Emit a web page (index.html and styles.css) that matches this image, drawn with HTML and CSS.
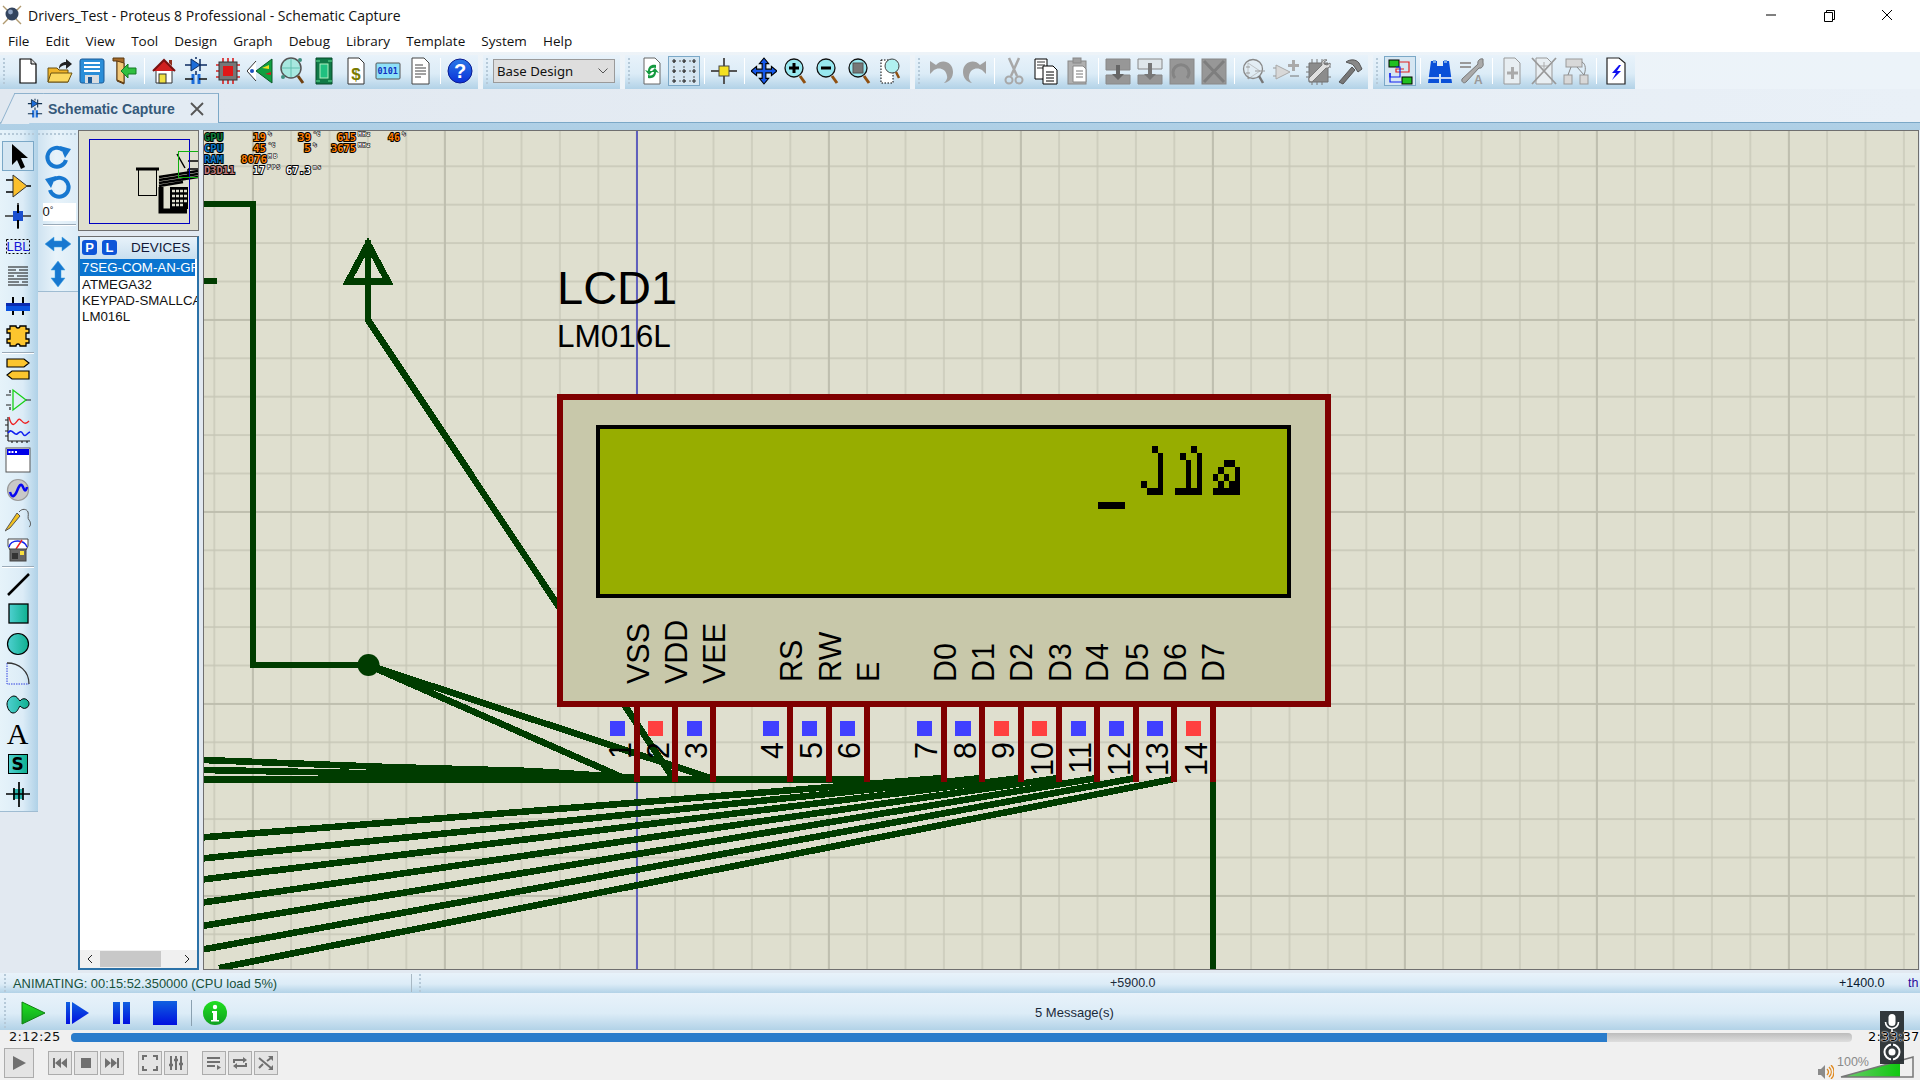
FILE: index.html
```html
<!DOCTYPE html>
<html lang="en">
<head>
<meta charset="utf-8">
<title>Drivers_Test - Proteus 8 Professional - Schematic Capture</title>
<link rel="stylesheet" href="styles.css">
</head>
<body>
<svg class="defs" width="0" height="0"><defs>
<linearGradient id="teal" x1="0" x2="1" y1="0" y2="0"><stop offset="0" stop-color="#4fd0d0"/><stop offset="1" stop-color="#0fb090"/></linearGradient>
<linearGradient id="blueb" x1="0" x2="0" y1="0" y2="1"><stop offset="0" stop-color="#2a7ae8"/><stop offset="1" stop-color="#0a30d8"/></linearGradient>
<linearGradient id="playb" x1="0" x2="0" y1="0" y2="1"><stop offset="0" stop-color="#1060e0"/><stop offset="1" stop-color="#0010e0"/></linearGradient>
<linearGradient id="playg" x1="0" x2="0" y1="0" y2="1"><stop offset="0" stop-color="#20e020"/><stop offset="1" stop-color="#10a020"/></linearGradient>
<linearGradient id="vol" x1="0" x2="1" y1="0" y2="0"><stop offset="0" stop-color="#70cc70"/><stop offset="1" stop-color="#10c810"/></linearGradient>
</defs></svg>
<div class="app">
  <header class="title">
    <svg class="appicon" viewBox="0 0 20 20"><path d="M1 1l18 18M19 1L1 19" stroke="#b09a70" stroke-width="1.4"/><circle cx="10" cy="9" r="6.5" fill="#33445f"/><circle cx="8.5" cy="7" r="2.4" fill="#8fa4c4"/></svg>
    <span class="title-text">Drivers_Test - Proteus 8 Professional - Schematic Capture</span>
    <div class="winbtns">
      <svg class="win" viewBox="0 0 46 20"><path d="M18 10h10" stroke="#000"/></svg>
      <svg class="win" viewBox="0 0 46 20"><path d="M18.500 7.500h8v9h-8zM20.500 7.500v-2h8v9h-2" fill="none" stroke="#000"/></svg>
      <svg class="win" viewBox="0 0 46 20"><path d="M18 5l10 10M28 5L18 15" stroke="#000"/></svg>
    </div>
  </header>
  <nav class="menu">
    <span>File</span><span>Edit</span><span>View</span><span>Tool</span><span>Design</span><span>Graph</span><span>Debug</span><span>Library</span><span>Template</span><span>System</span><span>Help</span>
  </nav>
  <div class="toolrow">
    <div class="tb tb1">
      <i class="grip"></i>
      <b class="btn"><svg viewBox="0 0 26 28"><path d="M5 2h11l5 5v19H5z" fill="#fff" stroke="#000" stroke-width="1.200"/><path d="M16 2v5h5" fill="#ddd" stroke="#000"/></svg></b>
      <b class="btn"><svg viewBox="0 0 26 28"><path d="M1 11h9l2 2h9v12H1z" fill="#f0b428" stroke="#6a5010"/><path d="M1 25l3-9h21l-4 9z" fill="#fbd860" stroke="#6a5010"/><path d="M12 12c0-5 3-7 7-7V2l6 5-6 5V8c-3 0-5 1-7 4z" fill="#222"/></svg></b>
      <b class="btn"><svg viewBox="0 0 26 28"><rect x="1" y="2" width="24" height="24" rx="2" fill="#2a8ed8" stroke="#1a5a98"/><path d="M5 5h16v2H5zM5 9h16v2H5zM5 13h16v2H5z" fill="#fff"/><rect x="6" y="18" width="14" height="8" fill="#d8dce0"/><rect x="9" y="20" width="4" height="6" fill="#1a5a98"/></svg></b>
      <b class="btn"><svg viewBox="0 0 26 28"><path d="M2 1h11v26l-7-3V4H2z" fill="#a56a28" stroke="#5a3810"/><path d="M6 4l7 2v20l-7-3z" fill="#f2c878" stroke="#5a3810"/><path d="M25 11h-8V7l-7 7 7 7v-4h8z" fill="#30c040" stroke="#157a25"/></svg></b>
      <i class="sep"></i>
      <b class="btn"><svg viewBox="0 0 26 28"><path d="M5 13h16v13H5z" fill="#fff" stroke="#333"/><path d="M2 14L13 3l11 11" fill="#d02020" stroke="#7a1010" stroke-width="2"/><path d="M18 3h3v6l-3-3z" fill="#903020"/><rect x="8" y="17" width="7" height="9" fill="#f0e040" stroke="#333"/></svg></b>
      <b class="btn"><svg viewBox="0 0 26 28"><path d="M8 2v12l9-6z" fill="#1c6cd8" stroke="#0a2a60"/><path d="M17 2v12M13 0v2M2 8h6M17 8h7M13 14v4" stroke="#0a2a60" stroke-width="1.500"/><path d="M10 17v10M16 17v10" stroke="#1c6cd8" stroke-width="3"/><path d="M2 22h8M16 22h8" stroke="#111" stroke-width="1.500"/></svg></b>
      <b class="btn"><svg viewBox="0 0 26 28"><path d="M8 1v26M13 1v26M18 1v26M1 8h24M1 14h24M1 20h24" stroke="#d82020" stroke-width="1.600"/><rect x="4" y="5" width="18" height="18" fill="#777" stroke="#333"/><rect x="8" y="9" width="10" height="10" fill="#e01818"/></svg></b>
      <b class="btn"><svg viewBox="0 0 26 28"><path d="M9 4L0 14l9 10" fill="#fff" stroke="#333"/><circle cx="5" cy="14" r="2" fill="#1c50c0"/><path d="M25 2L9 14l16 12z" fill="#10a040" stroke="#0a5a28"/><path d="M15 11l7-3v4z" fill="#f0e020"/><path d="M18 17l6-2v3z" fill="#d02020"/></svg></b>
      <b class="btn"><svg viewBox="0 0 26 28"><circle cx="12" cy="11" r="10" fill="#a8e8e0" stroke="#555" stroke-width="1.500"/><path d="M12 2v18M3 11h18" stroke="#60c0b0"/><path d="M19 19l5 7" stroke="#704010" stroke-width="3"/><circle cx="21" cy="3" r="2" fill="#409080"/><circle cx="4" cy="20" r="2" fill="#409080"/></svg></b>
      <b class="btn"><svg viewBox="0 0 26 28"><path d="M5 1h16v26H5z" fill="#107a48" stroke="#064a28"/><rect x="9" y="7" width="8" height="14" fill="#20c080" stroke="#b0f0c0"/><path d="M5 4h4M17 4h4M5 24h4M17 24h4" stroke="#60e090"/></svg></b>
      <b class="btn"><svg viewBox="0 0 26 28"><path d="M5 1h11l5 5v21H5z" fill="#fff" stroke="#333"/><text x="13" y="23" class="dollar">$</text></svg></b>
      <b class="btn"><svg viewBox="0 0 26 28"><rect x="1" y="6" width="24" height="16" rx="1" fill="#8ee0f8" stroke="#555"/><text x="2.500" y="17" class="binary">0101</text></svg></b>
      <b class="btn"><svg viewBox="0 0 26 28"><path d="M5 1h12l5 5v21H5z" fill="#fff" stroke="#444"/><path d="M8 8h8M8 11h11M8 14h11M8 17h11M8 20h6" stroke="#444" stroke-width="1.200"/></svg></b>
      <i class="sep"></i>
      <b class="btn"><svg viewBox="0 0 26 28"><circle cx="13" cy="14" r="12" fill="url(#blueb)" stroke="#0a1a90"/><text x="13" y="21" class="q">?</text></svg></b>
    </div>
    <div class="tb tb2">
      <i class="grip"></i>
      <div class="combo"><span>Base Design</span><svg viewBox="0 0 12 8"><path d="M1.500 1.500l4.500 4.500 4.500-4.500" fill="none" stroke="#555"/></svg></div>
    </div>
    <div class="tb tb3">
      <i class="grip"></i>
      <b class="btn"><svg viewBox="0 0 26 28"><path d="M5 1h11l5 5v21H5z" fill="#fff" stroke="#666"/><path d="M17 8c-5-1-8 2-8 6l-3-1 4 5 4-4-3 0c0-3 3-4 6-3z" fill="#169a40"/><path d="M9 21c5 1 8-2 8-6l3 1-4-5-4 4 3 0c0 3-3 4-6 3z" fill="#169a40"/></svg></b>
      <b class="btn on"><svg viewBox="0 0 26 28" class="gridicon"><path d="M3 4h20M3 14h20M3 24h20M3 4v20M13 4v20M23 4v20" stroke="#555" stroke-dasharray="2 3"/><path d="M1 4h4M3 2v4M11 4h4M13 2v4M21 4h4M23 2v4M1 14h4M3 12v4M11 14h4M13 12v4M21 14h4M23 12v4M1 24h4M3 22v4M11 24h4M13 22v4M21 24h4M23 22v4" stroke="#333" stroke-width="1.200"/></svg></b>
      <i class="sep"></i>
      <b class="btn"><svg viewBox="0 0 26 28"><path d="M13 1v26M0 14h26" stroke="#555" stroke-width="2"/><rect x="8" y="9" width="10" height="10" fill="#f4e020" stroke="#444"/></svg></b>
      <i class="sep"></i>
      <b class="btn"><svg viewBox="0 0 28 30"><path d="M14 1l5 6h-3v6h6v-3l6 5-6 5v-3h-6v6h3l-5 6-5-6h3v-6H6v3l-6-5 6-5v3h6V7H9z" fill="#1658e8" stroke="#000" stroke-width="1.200"/></svg></b>
      <b class="btn"><svg viewBox="0 0 26 28"><circle cx="11" cy="11" r="9" fill="#98e8f0" stroke="#111" stroke-width="1.300"/><path d="M11 6v10M6 11h10" stroke="#000" stroke-width="3"/><path d="M17 19l5 7" stroke="#905010" stroke-width="3"/></svg></b>
      <b class="btn"><svg viewBox="0 0 26 28"><circle cx="11" cy="11" r="9" fill="#98e8f0" stroke="#111" stroke-width="1.300"/><path d="M6 11h10" stroke="#000" stroke-width="3"/><path d="M17 19l5 7" stroke="#905010" stroke-width="3"/></svg></b>
      <b class="btn"><svg viewBox="0 0 26 28"><circle cx="11" cy="11" r="9" fill="#98e8f0" stroke="#111" stroke-width="1.300"/><rect x="6" y="6" width="10" height="10" fill="#777" stroke="#555"/><path d="M17 19l5 7" stroke="#905010" stroke-width="3"/></svg></b>
      <b class="btn"><svg viewBox="0 0 26 28"><rect x="2" y="3" width="12" height="23" fill="#fff" stroke="#000" stroke-dasharray="1.500 1.500"/><circle cx="13" cy="9" r="7" fill="#b0f0f0" stroke="#444"/><path d="M17 15l3 6" stroke="#905010" stroke-width="2.500"/></svg></b>
    </div>
    <div class="tb tb4">
      <i class="grip"></i>
      <b class="btn"><svg viewBox="0 0 26 28"><path d="M1 4v13l4-4c4-3 12-2 13 6 1 3-2 6-3 7 6-1 9-6 9-11C24 5 13 1 7 8L1 4z" fill="#a0a0a0"/></svg></b>
      <b class="btn"><svg viewBox="0 0 26 28"><path d="M25 4v13l-4-4c-4-3-12-2-13 6-1 3 2 6 3 7-6-1-9-6-9-11C2 5 13 1 19 8l6-4z" fill="#a0a0a0"/></svg></b>
      <i class="sep"></i>
      <b class="btn"><svg viewBox="0 0 26 28"><path d="M8 1l8 18M18 1l-8 18" stroke="#a8a8a8" stroke-width="2.500"/><circle cx="8" cy="23" r="3.500" fill="none" stroke="#a8a8a8" stroke-width="2"/><circle cx="18" cy="23" r="3.500" fill="none" stroke="#a8a8a8" stroke-width="2"/></svg></b>
      <b class="btn"><svg viewBox="0 0 26 28"><path d="M2 2h12v20H2z" fill="#fff" stroke="#000"/><path d="M4 5h8M4 8h8M4 11h8" stroke="#333"/><path d="M10 9h10l4 4v14H10z" fill="#fff" stroke="#000"/><path d="M13 15h8M13 18h8M13 21h8M13 24h8" stroke="#000" stroke-width="1.200"/></svg></b>
      <b class="btn"><svg viewBox="0 0 26 28"><rect x="3" y="4" width="18" height="23" fill="#b0b0b0" stroke="#888"/><rect x="8" y="1" width="8" height="5" fill="#a0a0a0" stroke="#888"/><path d="M8 9h10l3 3v13H8z" fill="#fff" stroke="#888"/><path d="M11 14h7M11 17h7M11 20h7" stroke="#777"/></svg></b>
      <i class="sep"></i>
      <b class="btn"><svg viewBox="0 0 26 28"><path d="M1 2h24v11H1zM1 18h24v9H1z" fill="#979797" stroke="#888"/><path d="M11 8h4v9h4l-6 6-6-6h4z" fill="#666"/></svg></b>
      <b class="btn"><svg viewBox="0 0 26 28"><path d="M1 2h24v10H1z" fill="#dfe6ea" stroke="#888"/><path d="M1 18h24v9H1z" fill="#979797" stroke="#888"/><path d="M11 6h4v11h4l-6 6-6-6h4z" fill="#777"/></svg></b>
      <b class="btn"><svg viewBox="0 0 26 28"><rect x="1" y="2" width="24" height="25" fill="#979797" stroke="#888"/><path d="M6 21a8 8 0 1 1 12 0" fill="none" stroke="#848484" stroke-width="3"/></svg></b>
      <b class="btn"><svg viewBox="0 0 26 28"><rect x="1" y="2" width="24" height="25" fill="#979797" stroke="#888"/><path d="M3 4l20 21M23 4L3 25" stroke="#7e7e7e" stroke-width="3"/></svg></b>
      <i class="sep"></i>
      <b class="btn"><svg viewBox="0 0 26 28"><path d="M7 6l12 8-12 8z" fill="none" stroke="#999"/><circle cx="12" cy="12" r="9.500" fill="#e4ecef" fill-opacity=".5" stroke="#888" stroke-width="1.300"/><path d="M5 10h4M5 16h4M14 14h10" stroke="#999"/><path d="M18 19l4 7" stroke="#777" stroke-width="2.500"/></svg></b>
      <b class="btn"><svg viewBox="0 0 26 28"><path d="M3 8l14 7-14 7z" fill="#d8d8d8" stroke="#aaa"/><path d="M0 11h3M0 19h3" stroke="#999"/><path d="M19 3h3v4h4v3h-4v4h-3v-4h-4V7h4z" fill="#aaa"/><path d="M17 19h9" stroke="#777"/></svg></b>
      <b class="btn"><svg viewBox="0 0 26 28"><path d="M4 6v19h19V6z" fill="#8c8c8c" stroke="#707070"/><path d="M7 2v4M12 2v4M17 2v4M7 25v3M12 25v3M17 25v3M1 10h3M1 15h3M1 20h3M23 10h3M23 20h3" stroke="#777"/><path d="M22 3c-3-1-6 1-5 5L4 21c-1 3 2 5 4 3L21 11c3 1 5-3 4-5l-3 2-3-1 0-2z" fill="#e0e0e0" stroke="#777"/></svg></b>
      <b class="btn"><svg viewBox="0 0 26 28"><path d="M2 25L15 10l3 3L6 27z" fill="#777" stroke="#555"/><path d="M9 5c4-3 10-3 13 1l3 6-4 3-4-6c-2-3-4-2-8-4z" fill="#888" stroke="#555"/></svg></b>
    </div>
    <div class="tb tb5">
      <i class="grip"></i>
      <b class="btn on"><svg viewBox="0 0 26 28"><rect x="2" y="3" width="10" height="7" fill="#20c020" stroke="#000"/><rect x="15" y="20" width="10" height="7" fill="#20c020" stroke="#000"/><path d="M12 5h10v10H9v-3h8" fill="none" stroke="#e02020" stroke-width="1.200"/><path d="M9 10h4v10H3v-4" fill="none" stroke="#1020f0" stroke-width="1.200"/><path d="M3 16v9h12" fill="none" stroke="#1020f0" stroke-width="1.200"/></svg></b>
      <i class="sep"></i>
      <b class="btn"><svg viewBox="0 0 26 28"><path d="M4 4h6v5h6V4h6l3 22H14v-9h-2v9H1z" fill="#0a50d8"/><path d="M6 3h3v3H6zM17 3h3v3h-3z" fill="#78a8e8"/><path d="M1 21h11M14 21h11" stroke="#fff" stroke-width="1.500"/></svg></b>
      <b class="btn"><svg viewBox="0 0 26 28"><path d="M1 6h11M1 10h11" stroke="#999" stroke-width="2"/><path d="M24 2c-3-1-6 2-5 5L3 22c-1 3 2 5 4 3L20 11c3 1 5-3 4-5z" fill="#aaa" stroke="#777"/><text x="15" y="27" class="atext">A</text></svg></b>
      <i class="sep"></i>
      <b class="btn"><svg viewBox="0 0 26 28"><path d="M5 1h11l5 5v21H5z" fill="#e8eef2" stroke="#999"/><path d="M8 16h11M13.500 10v12" stroke="#aaa" stroke-width="3"/></svg></b>
      <b class="btn"><svg viewBox="0 0 26 28"><path d="M5 1h11l5 5v21H5z" fill="#e8eef2" stroke="#999"/><path d="M1 1l24 26M25 1L1 27" stroke="#999" stroke-width="1.800"/><path d="M13 5v8M9 9h8" stroke="#aaa"/></svg></b>
      <b class="btn"><svg viewBox="0 0 26 28"><rect x="3" y="2" width="16" height="8" fill="#d8d8d8" stroke="#999"/><rect x="1" y="18" width="8" height="9" fill="#d8d8d8" stroke="#999"/><rect x="17" y="18" width="8" height="9" fill="#d8d8d8" stroke="#999"/><path d="M8 10L5 18M14 10l7 8M19 5c4 2 4 8 2 13" fill="none" stroke="#888"/></svg></b>
      <i class="sep"></i>
      <b class="btn"><svg viewBox="0 0 26 28"><path d="M4 1h12l6 5v21H4z" fill="#fff" stroke="#222" stroke-width="1.200"/><path d="M16 8l-7 8h4l-4 7 9-9h-4l4-6z" fill="#1010f0"/></svg></b>
    </div>
  </div>
  <div class="tabrow">
    <div class="tab">
      <svg class="tabicon" viewBox="0 0 18 22"><path d="M5 1v9l7-4.500z" fill="#1c6cd8" stroke="#12304f"/><path d="M12 1v9M1 5.500h4M12 5.500h5M9 0v2M9 10v3" stroke="#12304f" stroke-width="1.200"/><path d="M7 13v8M11 13v8" stroke="#1c6cd8" stroke-width="2.500"/><path d="M1 17h6M11 17h6" stroke="#12304f" stroke-width="1.200"/></svg>
      <span>Schematic Capture</span>
      <svg class="tabclose" viewBox="0 0 14 14"><path d="M1 1l12 12M13 1L1 13" stroke="#555" stroke-width="1.800"/></svg>
    </div>
  </div>
  <div class="strip"></div>
  <main class="main">
    <div class="lbar">
      <i class="hgrip"></i>
      <b class="lb on"><svg viewBox="0 0 26 28"><path d="M7 2v21l5-5 4 9 4-2-4-9h7z" fill="#000"/></svg></b>
      <b class="lb"><svg viewBox="0 0 26 28"><path d="M8 3v22l14-11z" fill="#fbc02d" stroke="#333"/><path d="M1 8h7M1 20h7M22 14h4" stroke="#000" stroke-width="1.300"/></svg></b>
      <b class="lb"><svg viewBox="0 0 26 28"><path d="M13 1v26M0 14h26" stroke="#333" stroke-width="1.600"/><rect x="8" y="9" width="10" height="10" fill="#1c50d0"/><path d="M13 3v8M13 18v8" stroke="#000" stroke-width="2"/></svg></b>
      <b class="lb"><svg viewBox="0 0 26 28"><rect x="1.500" y="7.500" width="23" height="14" fill="none" stroke="#000" stroke-dasharray="2 2"/><text x="13" y="19" class="lbl">LBL</text></svg></b>
      <b class="lb"><svg viewBox="0 0 26 28"><path d="M3 5h20M3 8h8M14 8h9M3 11h20M3 14h6M12 14h11M3 17h20M3 20h11M17 20h6M3 23h20" stroke="#111" stroke-width="1"/></svg></b>
      <b class="lb"><svg viewBox="0 0 26 28"><path d="M8 5v18M18 5v18" stroke="#000" stroke-width="2"/><rect x="1" y="11" width="24" height="8" fill="#0a52e0"/><rect x="1" y="11" width="24" height="3" fill="#0a2ab0"/></svg></b>
      <b class="lb"><svg viewBox="0 0 26 28"><path d="M5 4h6a2 2 0 0 0 4 0h6v3h3v4h-3v6h3v4h-3v3h-6a2 2 0 0 0-4 0H5v-3H2v-4h3v-6H2V7h3z" fill="#fcc52e" stroke="#000" stroke-width="1.300"/></svg></b>
      <i class="lsep"></i>
      <b class="lb"><svg viewBox="0 0 26 28"><path d="M2 3h17l5 4-5 4H2z" fill="#fcc52e" stroke="#000" stroke-width="1.200"/><path d="M24 15H7l-5 4 5 4h17z" fill="#fcc52e" stroke="#000" stroke-width="1.200"/></svg></b>
      <b class="lb"><svg viewBox="0 0 26 28"><path d="M8 4v20l13-10z" fill="none" stroke="#18d018" stroke-width="1.300"/><path d="M1 9h5M1 19h5M21 14h5M5 4v3M5 21v3" stroke="#222" stroke-width="1.200"/></svg></b>
      <b class="lb"><svg viewBox="0 0 26 28"><path d="M3 1v24M3 25h22M3 4H0M3 9H0M3 15H0M3 20H0M7 25v2M12 25v2M17 25v2M22 25v2" stroke="#222" stroke-width="1.200"/><path d="M4 1c3 12 6 7 9 3s5 8 11 1" fill="none" stroke="#ee2020" stroke-width="1.300"/><path d="M3 17c4-6 6 3 9 1s4-4 6 0 4-1 7-2" fill="none" stroke="#1020f0" stroke-width="1.600"/></svg></b>
      <b class="lb"><svg viewBox="0 0 26 28"><rect x="1" y="2" width="24" height="24" fill="#fff" stroke="#555"/><rect x="2" y="3" width="22" height="6" fill="#0000e8"/><path d="M3.500 6h2M6.500 6h2M10 6h2" stroke="#fff" stroke-width="2"/></svg></b>
      <b class="lb"><svg viewBox="0 0 26 28"><circle cx="13" cy="14" r="10.500" fill="#c8c8c8" stroke="#999" stroke-width="1.200"/><path d="M5 16c2 7 5 4 7-1s4-9 6-4 3 4 4 0" fill="none" stroke="#0808f0" stroke-width="2.500"/></svg></b>
      <b class="lb"><svg viewBox="0 0 26 28"><path d="M0 25l5-3 10-12-3-3L4 19z" fill="#f0c020" stroke="#555"/><path d="M14 6c3-4 8-3 9 0s-1 6 1 8 2 6 0 7" fill="none" stroke="#555"/></svg></b>
      <b class="lb"><svg viewBox="0 0 26 28"><path d="M3 3h20v7l-2 4H5L3 10z" fill="#fff" stroke="#444"/><path d="M4 11c2-8 15-8 18 0" fill="none" stroke="#1020f0" stroke-width="1.400"/><path d="M11 13l6-9" stroke="#ee2020" stroke-width="1.400"/><rect x="5" y="13" width="16" height="12" fill="#666" stroke="#444"/><rect x="7" y="17" width="6" height="6" fill="#333"/><rect x="15" y="15" width="4" height="4" fill="#f8e040"/></svg></b>
      <i class="lsep"></i>
      <b class="lb"><svg viewBox="0 0 26 28"><path d="M3 25L24 4" stroke="#000" stroke-width="2.500"/></svg></b>
      <b class="lb"><svg viewBox="0 0 26 28"><rect x="4" y="4" width="19" height="19" fill="url(#teal)" stroke="#000" stroke-width="1.300"/></svg></b>
      <b class="lb"><svg viewBox="0 0 26 28"><circle cx="13" cy="14" r="10.500" fill="url(#teal)" stroke="#000" stroke-width="1.200"/></svg></b>
      <b class="lb"><svg viewBox="0 0 26 28"><path d="M2 3v21h22" fill="none" stroke="#3040e0" stroke-dasharray="1.500 1"/><path d="M2 3c12 0 22 8 22 21" fill="none" stroke="#333" stroke-width="1.300"/></svg></b>
      <b class="lb"><svg viewBox="0 0 26 28"><path d="M2 14c0-4 4-8 7-8 3 0 4 3 6 5 2-3 6-3 8 0 2 2 1 6-2 7-2 1-4 0-6-2-2 3-3 7-7 7-3 0-6-5-6-9z" fill="url(#teal)" stroke="#000"/></svg></b>
      <b class="lb"><span class="serif-a">A</span></b>
      <b class="lb"><span class="sym-s">S</span></b>
      <b class="lb"><svg viewBox="0 0 26 28"><rect x="8" y="9" width="10" height="10" fill="#2ab0a8"/><path d="M14 2v25M1 14h24M9 8v12M18 8v12" stroke="#000" stroke-width="1.700"/></svg></b>
    </div>
    <div class="rbar">
      <div class="rbar-in">
        <i class="hgrip"></i>
        <b class="rb"><svg viewBox="0 0 28 28"><path d="M19 6a9.500 9.500 0 1 0 3 10" fill="none" stroke="#1878d0" stroke-width="4"/><path d="M16 2l11 3-6 9z" fill="#1878d0"/></svg></b>
        <b class="rb"><svg viewBox="0 0 28 28"><path d="M9 6a9.500 9.500 0 1 1-3 10" fill="none" stroke="#1878d0" stroke-width="4"/><path d="M12 2L1 5l6 9z" fill="#1878d0"/></svg></b>
        <div class="angle">0<sup>°</sup></div>
        <i class="lsep rsep"></i>
        <b class="rb"><svg viewBox="0 0 28 28"><path d="M1 14l9-7v4h8V7l9 7-9 7v-4h-8v4z" fill="#1878d0" stroke="#3aa0e0" stroke-width=".5"/></svg></b>
        <b class="rb"><svg viewBox="0 0 28 28"><path d="M14 1l7 9h-4v8h4l-7 9-7-9h4v-8H7z" fill="#1878d0" stroke="#3aa0e0" stroke-width=".5"/></svg></b>
      </div>
    </div>
    <div class="panels">
      <div class="overview">
        <svg viewBox="78 130 119 99" width="119" height="99">
          <rect x="78" y="130" width="119" height="99" fill="#dfdfcf"/>
          <path d="M135 168h23" stroke="#000" stroke-width="3"/>
          <rect x="137.500" y="168.500" width="18" height="26" fill="none" stroke="#000"/>
          <path d="M176 153l8 14M187 168h12M187 160h12v20M187 168v8" fill="none" stroke="#000" stroke-width="1.500"/>
          <path d="M158 176l39-6M158 179l39-6M158 182l39-6M158 185l24-4" stroke="#000" stroke-width="2.500"/>
          <path d="M160 186v24h26" fill="none" stroke="#000" stroke-width="5"/>
          <rect x="169" y="186" width="18" height="22" fill="#000"/>
          <path d="M171 190h3M175 190h3M179 190h3M183 190h3M171 195h3M175 195h3M179 195h3M183 195h3M171 200h3M175 200h3M179 200h3M183 200h3M171 204h3M175 204h3M179 204h3" stroke="#dfdfcf" stroke-width="2.500"/>
          <rect x="88.500" y="138.500" width="100" height="84" fill="none" stroke="#0000c0"/>
          <rect x="177.500" y="150.500" width="22" height="26" fill="none" stroke="#10b010"/>
        </svg>
      </div>
      <div class="devices">
        <div class="dev-head"><b class="pl">P</b><b class="pl">L</b><span>DEVICES</span></div>
        <ul class="dev-list">
          <li class="sel">7SEG-COM-AN-GRN</li>
          <li>ATMEGA32</li>
          <li>KEYPAD-SMALLCALC</li>
          <li>LM016L</li>
        </ul>
        <div class="hscroll">
          <svg viewBox="0 0 8 10"><path d="M6 1L2 5l4 4" fill="none" stroke="#222"/></svg>
          <i class="thumb"></i>
          <svg viewBox="0 0 8 10"><path d="M2 1l4 4-4 4" fill="none" stroke="#222"/></svg>
        </div>
      </div>
    </div>
    <div class="canvas">
      <svg class="sheet" viewBox="204 131 1711 838" width="1711" height="838">
        <defs>
          <pattern id="minor" patternUnits="userSpaceOnUse" x="213.300" y="165.300" width="38.400" height="38.400"><path d="M1 0V38.400M0 1H38.400" stroke="#c6c6b6" stroke-width="1.300" fill="none"/></pattern>
          <pattern id="major" patternUnits="userSpaceOnUse" x="252" y="319" width="192" height="192"><path d="M1 0V192M0 1H192" stroke="#bcbcac" stroke-width="1.600" fill="none"/></pattern>
        </defs>
        <rect x="204" y="131" width="1711" height="838" fill="#dfdfcf"/>
        <rect x="204" y="131" width="1711" height="838" fill="url(#minor)"/>
        <rect x="204" y="131" width="1711" height="838" fill="url(#major)"/>
        <path d="M637 131V969" class="cursor"/>

        <g class="stats">
          <text x="204" y="141" class="s-g" textLength="19" lengthAdjust="spacingAndGlyphs">GPU</text>
          <text x="253" y="141" class="s-o" textLength="13" lengthAdjust="spacingAndGlyphs">19</text><text x="268" y="136" class="s-u">%</text>
          <text x="298" y="141" class="s-o" textLength="13" lengthAdjust="spacingAndGlyphs">39</text><text x="313" y="136" class="s-u">°C</text>
          <text x="337" y="141" class="s-o" textLength="19" lengthAdjust="spacingAndGlyphs">615</text><text x="358" y="136" class="s-u" textLength="12">MHz</text>
          <text x="388" y="141" class="s-o" textLength="12" lengthAdjust="spacingAndGlyphs">46</text><text x="402" y="136" class="s-u">%</text>
          <text x="204" y="152" class="s-b" textLength="19" lengthAdjust="spacingAndGlyphs">CPU</text>
          <text x="253" y="152" class="s-o" textLength="13" lengthAdjust="spacingAndGlyphs">45</text><text x="268" y="147" class="s-u">°C</text>
          <text x="304" y="152" class="s-o" textLength="7" lengthAdjust="spacingAndGlyphs">5</text><text x="313" y="147" class="s-u">%</text>
          <text x="331" y="152" class="s-o" textLength="25" lengthAdjust="spacingAndGlyphs">3675</text><text x="358" y="147" class="s-u" textLength="12">MHz</text>
          <text x="204" y="163" class="s-b" textLength="19" lengthAdjust="spacingAndGlyphs">RAM</text>
          <text x="241" y="163" class="s-o" textLength="26" lengthAdjust="spacingAndGlyphs">8076</text><text x="268" y="158" class="s-u" textLength="9">MB</text>
          <text x="204" y="174" class="s-p" textLength="31" lengthAdjust="spacingAndGlyphs">D3D11</text>
          <text x="253" y="174" class="s-w" textLength="12" lengthAdjust="spacingAndGlyphs">17</text><text x="267" y="169" class="s-u" textLength="13">FPS</text>
          <text x="286" y="174" class="s-w" textLength="25" lengthAdjust="spacingAndGlyphs">67.3</text><text x="313" y="169" class="s-u" textLength="8">ms</text>
        </g>

        <g class="wire">
          <path d="M204 204H253V665H368"/>
          <path d="M204 281H217"/>
          <path d="M368 240V320L673 778"/>
          <path d="M348 281.500H388L368 244Z"/>
          <path d="M368 665L626 779"/>
          <path d="M368 665L713 779"/>
          <path d="M204 760L387 767 531 771 637 778"/>
          <path d="M204 770L359 773 490 775 637 778"/>
          <path d="M204 779.700H867"/>
          <path d="M1213 780V969"/>
          <path d="M204 837.300L943 778"/>
          <path d="M204 858.300L982 778"/>
          <path d="M204 879.300L1021 778"/>
          <path d="M204 902.300L1059 778"/>
          <path d="M204 925.700L1097 778"/>
          <path d="M204 949.300L1136 778"/>
          <path d="M219 968L1174 779"/>
        </g>
        <circle cx="368.500" cy="665" r="11" class="junction"/>

        <text x="557" y="304" class="ref">LCD1</text>
        <text x="557" y="347" class="val">LM016L</text>

        <rect x="560" y="397" width="768" height="307" class="lcd"/>
        <rect x="598" y="427" width="691" height="169" class="screen"/>
        <g class="seg">
          <rect x="1098" y="502" width="27" height="7"/>
          <rect x="1152" y="446" width="6" height="7"/><rect x="1158" y="453" width="5" height="42"/><rect x="1147" y="488" width="16" height="7"/><rect x="1141" y="481" width="6" height="7"/>
          <rect x="1191" y="446" width="6" height="7"/><rect x="1180" y="453" width="6" height="7"/><rect x="1197" y="453" width="5" height="42"/><rect x="1186" y="460" width="5" height="35"/><rect x="1175" y="488" width="27" height="7"/>
          <rect x="1224" y="460" width="11" height="7"/><rect x="1218" y="467" width="6" height="7"/><rect x="1235" y="467" width="5" height="28"/><rect x="1213" y="474" width="5" height="7"/><rect x="1224" y="474" width="5" height="7"/><rect x="1218" y="481" width="6" height="7"/><rect x="1229" y="481" width="11" height="7"/><rect x="1213" y="488" width="27" height="7"/>
        </g>

        <path class="pin" d="M637 707V782M675 707V782M713 707V782M790 707V782M829 707V782M867 707V782M944 707V782M982 707V782M1021 707V782M1059 707V782M1097 707V782M1136 707V782M1174 707V782M1213 707V782"/>

        <g class="plabel">
          <text transform="translate(648.800 684) rotate(-90)">VSS</text>
          <text transform="translate(686.800 684) rotate(-90)">VDD</text>
          <text transform="translate(724.800 684) rotate(-90)">VEE</text>
          <text transform="translate(801.500 682) rotate(-90)">RS</text>
          <text transform="translate(840.800 682) rotate(-90)">RW</text>
          <text transform="translate(878.800 682) rotate(-90)">E</text>
          <text transform="translate(955.500 682) rotate(-90)">D0</text>
          <text transform="translate(993.500 682) rotate(-90)">D1</text>
          <text transform="translate(1032.200 682) rotate(-90)">D2</text>
          <text transform="translate(1070.500 682) rotate(-90)">D3</text>
          <text transform="translate(1108.200 682) rotate(-90)">D4</text>
          <text transform="translate(1147.500 682) rotate(-90)">D5</text>
          <text transform="translate(1185.500 682) rotate(-90)">D6</text>
          <text transform="translate(1224.200 682) rotate(-90)">D7</text>
        </g>
        <g class="pnum">
          <text transform="translate(630.800 742) rotate(-90)">1</text>
          <text transform="translate(668.800 742) rotate(-90)">2</text>
          <text transform="translate(706.800 742) rotate(-90)">3</text>
          <text transform="translate(782.800 742) rotate(-90)">4</text>
          <text transform="translate(822.200 742) rotate(-90)">5</text>
          <text transform="translate(860.200 742) rotate(-90)">6</text>
          <text transform="translate(936.800 742) rotate(-90)">7</text>
          <text transform="translate(975.500 742) rotate(-90)">8</text>
          <text transform="translate(1014.200 742) rotate(-90)">9</text>
          <text transform="translate(1052.500 742) rotate(-90)">10</text>
          <text transform="translate(1090.500 742) rotate(-90)">11</text>
          <text transform="translate(1130.200 742) rotate(-90)">12</text>
          <text transform="translate(1168.200 742) rotate(-90)">13</text>
          <text transform="translate(1206.500 742) rotate(-90)">14</text>
        </g>
        <g class="lo"><rect x="610" y="721" width="15" height="15"/><rect x="687" y="721" width="15" height="15"/><rect x="763" y="721" width="16" height="15"/><rect x="802" y="721" width="15" height="15"/><rect x="840" y="721" width="15" height="15"/><rect x="917" y="721" width="15" height="15"/><rect x="955" y="721" width="16" height="15"/><rect x="1071" y="721" width="15" height="15"/><rect x="1109" y="721" width="15" height="15"/><rect x="1147" y="721" width="16" height="15"/></g>
        <g class="hi"><rect x="648" y="721" width="15" height="15"/><rect x="994" y="721" width="15" height="15"/><rect x="1032" y="721" width="15" height="15"/><rect x="1186" y="721" width="15" height="15"/></g>
      </svg>
    </div>
  </main>
  <div class="status">
    <i class="grip"></i>
    <span class="anim">ANIMATING: 00:15:52.350000 (CPU load 5%)</span>
    <i class="vsep"></i>
    <i class="grip"></i>
    <span class="coord-x">+5900.0</span>
    <span class="coord-y">+1400.0</span>
    <span class="units">th</span>
  </div>
  <div class="player">
    <i class="grip"></i>
    <svg class="pbtn" viewBox="0 0 26 24"><path d="M2 1l23 11L2 23z" fill="url(#playg)" stroke="#108010"/></svg>
    <svg class="pbtn" viewBox="0 0 26 24"><path d="M2 1h4v22H2z" fill="url(#playb)"/><path d="M8 1l17 11L8 23z" fill="url(#playb)"/></svg>
    <svg class="pbtn" viewBox="0 0 26 24"><path d="M5 1h7v22H5zM15 1h7v22h-7z" fill="url(#playb)"/></svg>
    <svg class="pbtn" viewBox="0 0 26 24"><rect x="1" y="0" width="24" height="24" fill="url(#playb)"/></svg>
    <i class="psep"></i>
    <svg class="pinfo" viewBox="0 0 24 24"><circle cx="12" cy="12" r="12" fill="url(#playg)"/><circle cx="12" cy="6" r="2.200" fill="#fff"/><path d="M9 10h5v9h2v1.500H8V19h2v-7H9z" fill="#fff"/></svg>
    <span class="msgs">5 Message(s)</span>
  </div>
  <footer class="media">
    <div class="seek">
      <span class="time">2:12:25</span>
      <div class="track"><i class="fill"></i></div>
      <span class="time end">2:33:37</span>
    </div>
    <div class="controls">
      <b class="mb play"><svg viewBox="0 0 16 18"><path d="M2 2l13 7-13 7z" fill="#707070"/></svg></b>
      <b class="mb first"><svg viewBox="0 0 16 16"><path d="M1 3h2v10H1zM9 3v10L3 8zM15 3v10L9 8z" fill="#707070"/></svg></b>
      <b class="mb"><svg viewBox="0 0 16 16"><rect x="3" y="3" width="10" height="10" fill="#707070"/></svg></b>
      <b class="mb"><svg viewBox="0 0 16 16"><path d="M13 3h2v10h-2zM7 3v10l6-5zM1 3v10l6-5z" fill="#707070"/></svg></b>
      <b class="mb gap"><svg viewBox="0 0 16 16"><path d="M1 5V1h4M11 1h4v4M15 11v4h-4M5 15H1v-4" fill="none" stroke="#707070" stroke-width="2"/></svg></b>
      <b class="mb"><svg viewBox="0 0 16 16"><path d="M3 1v14M8 1v14M13 1v14" stroke="#707070" stroke-width="2"/><path d="M1 10h4M6 5h4M11 9h4" stroke="#707070" stroke-width="2.500"/></svg></b>
      <b class="mb gap"><svg viewBox="0 0 16 16"><path d="M1 3h13M1 7h13M1 11h8" stroke="#707070" stroke-width="2"/><path d="M11 10v5l4-2.500z" fill="#707070"/></svg></b>
      <b class="mb"><svg viewBox="0 0 16 16"><path d="M2 8V5h10M14 8v3H4" fill="none" stroke="#707070" stroke-width="2"/><path d="M11 2v6l4-3zM5 8v6l-4-3z" fill="#707070"/></svg></b>
      <b class="mb"><svg viewBox="0 0 16 16"><path d="M1 3l12 10M1 13l4-4M9 6l4-3" stroke="#707070" stroke-width="2"/><path d="M10 1h5v5zM10 15h5v-5z" fill="#707070"/></svg></b>
      <div class="volume">
        <svg class="speaker" viewBox="0 0 16 14"><path d="M0 4h3l4-4v14l-4-4H0z" fill="#8a8a8a"/><path d="M9 4c2 2 2 4 0 6M11 2c3 3 3 7 0 10M13 0c4 4 4 10 0 14" fill="none" stroke="#e08a20" stroke-width="1.300"/></svg>
        <span class="volpct">100%</span>
        <svg class="voltri" viewBox="0 0 74 22" width="74" height="22"><path d="M1 21L60 4.500V21Z" fill="url(#vol)"/><path d="M1 21L73 1V21Z" fill="none" stroke="#777" stroke-width="1.500"/></svg>
      </div>
    </div>
    <div class="overlay">
      <svg viewBox="0 0 24 24" width="24" height="24"><rect x="8.500" y="3" width="7" height="12" rx="3.500" fill="#fff"/><path d="M5.500 11a6.500 6.500 0 0 0 13 0M12 18v3" fill="none" stroke="#fff" stroke-width="1.600"/></svg>
      <svg viewBox="0 0 24 24" width="24" height="24"><circle cx="12" cy="12" r="7.500" fill="none" stroke="#fff" stroke-width="2"/><circle cx="12" cy="12" r="3.500" fill="#fff"/><path d="M12 1v5M12 18v5" stroke="#333a3f" stroke-width="2"/></svg>
    </div>
  </footer>
</div>
</body>
</html>
```
FILE: styles.css
```css
* { box-sizing: border-box; }
html, body { margin: 0; padding: 0; background: #f0f0f0; }
body { width: 1920px; height: 1080px; overflow: hidden; font-family: "Open Sans", "Noto Sans", sans-serif; color: #000; }
i, b { display: block; font-style: normal; }
.defs { position: absolute; }
.app { width: 1920px; height: 1080px; display: flex; flex-direction: column; position: relative; overflow: hidden; }

.title { height: 30px; background: #fff; display: flex; align-items: center; padding-left: 2px; flex: none; }
.appicon { width: 20px; height: 20px; flex: none; }
.title-text { margin-left: 6px; font-size: 14px; color: #111; }
.winbtns { margin-left: auto; display: flex; margin-right: 4px; }
.win { width: 58px; height: 20px; }

.menu { height: 22px; background: #fff; display: flex; align-items: center; flex: none; padding-left: 8px; gap: 16.100px; font-size: 13.500px; color: #111; }

.toolrow { height: 37px; flex: none; display: flex; gap: 5px; align-items: flex-start; padding-top: 3px; background: linear-gradient(90deg, #eef3f7, #ecf3f9); }
.tb { height: 34px; flex: none; display: flex; align-items: flex-start; padding-top: 1px; padding-right: 2px; background: linear-gradient(#e8f2fa, #dcecf7 55%, #b2d2e7); }
.tb5 { padding-right: 3px; }
.tb2 { padding-right: 5px; }
.grip { flex: none; height: 28px; width: 2px; background: repeating-linear-gradient(#b5c9d8 0 2px, transparent 2px 4px); }
.tb .grip { margin: 2px 6px 0 3px; }
.tb1 .grip { margin: 2px 7px 0 3px; }
.tb2 .grip { margin: 2px 5px 0 3px; }
.btn { width: 32px; height: 30px; display: flex; align-items: center; justify-content: center; flex: none; }
.btn svg { width: 26px; height: 28px; }
.btn.on { background: #d5e6f2; border: 1px solid #7ba8c7; }
.sep { height: 26px; margin: 2px 3px 0 4px; background: #a8b8c4; border-right: 1px solid #fff; flex: none; box-sizing: content-box; width: 0; }
.combo { width: 122px; height: 24px; flex: none; margin-top: 3px; background: #dedede; border: 1px solid #9a9a9a; display: flex; align-items: center; justify-content: space-between; padding: 0 5px 0 3px; font-size: 13.200px; font-family: "Noto Sans", sans-serif; color: #111; }
.combo svg { width: 12px; height: 8px; }

.tabrow { height: 34px; flex: none; border-bottom: 1px solid #7ba8c7; background: linear-gradient(90deg, #e1e8f0, #e9f0f7); padding-top: 4px; padding-left: 14px; }
.tab { position: relative; width: 205px; height: 30px; background: #e3ebf3; border-top: 1px solid #8fb2cd; border-right: 1px solid #7ba8c7; display: flex; align-items: center; padding-left: 13px; }
.tab::before { content: ""; position: absolute; left: -14px; top: -1px; width: 28px; height: 30px; border-left: 1px solid #8fb2cd; border-top: 1px solid #8fb2cd; transform-origin: 50% 100%; transform: skewX(-25deg); background: #e3ebf3; }
.tabicon { width: 16px; height: 21px; position: relative; }
.tab span { position: relative; margin-left: 5px; font: bold 14px "Liberation Sans", sans-serif; color: #35597a; }
.tabclose { width: 14px; height: 14px; margin-left: 15px; position: relative; }
.strip { height: 7px; flex: none; background: linear-gradient(#b0d0e6, #aecfe5); }

.main { height: 840px; flex: none; display: flex; background: #e2e9f1; }
.lbar { width: 38px; height: 682px; flex: none; background: linear-gradient(90deg, #e6f3fa, #dcecf7 60%, #afd1e7); display: flex; flex-direction: column; align-items: center; padding-right: 3px; border-bottom: 1px solid #9fbcd2; }
.hgrip { height: 11px; width: 100%; flex: none; background: radial-gradient(circle at 1px 4px, #b5c9d8 1px, transparent 1.200px) 0 0 / 4px 11px repeat-x; }
.lb { width: 32px; height: 30px; flex: none; display: flex; align-items: center; justify-content: center; }
.lb svg { width: 26px; height: 28px; }
.lb.on { background: #d5e6f2; border: 1px solid #7ba8c7; }
.serif-a { font: 30px/30px "Liberation Serif", serif; color: #000; }
.sym-s { width: 20px; height: 20px; background: linear-gradient(90deg, #4fd0d0, #0fb090); border: 1px solid #000; font: 900 17px/18px "DejaVu Sans", sans-serif; color: #000; text-align: center; }
.lsep { width: 32px; flex: none; margin: 1px 0; background: #fff; border-top: 1px solid #9aaab8; height: 2px; }
.rbar { width: 40px; flex: none; }
.rbar-in { height: 162px; background: linear-gradient(90deg, #cfe3f1, #e8f3fa 45%, #dcecf7); border-bottom: 1px solid #9fbcd2; display: flex; flex-direction: column; align-items: center; padding-right: 1px; }
.rb { width: 32px; height: 30px; flex: none; display: flex; align-items: center; justify-content: center; }
.rb svg { width: 28px; height: 28px; }
.rbar-in .hgrip { height: 13px; }
.angle { width: 33px; height: 18px; flex: none; margin-left: 3px; background: #fff; font: 13px "Liberation Sans", sans-serif; line-height: 18px; color: #111; }
.angle sup { font-size: 9px; line-height: 0; vertical-align: 3px; }
.rsep { width: 33px; margin: 3px 0 3px 3px; }

.panels { width: 121px; flex: none; display: flex; flex-direction: column; gap: 5px; }
.overview { height: 101px; border: 1px solid #6f6f6f; flex: none; }
.overview svg { display: block; }
.devices { flex: 1; border-left: 2px solid #2c72a8; border-right: 2px solid #2c72a8; border-bottom: 2px solid #2c72a8; border-top: 1px solid #6f6f6f; display: flex; flex-direction: column; background: #fff; min-height: 0; }
.dev-head { height: 22px; flex: none; display: flex; align-items: center; gap: 5px; padding: 0 0 1px 2px; background: linear-gradient(#e8f2fa, #c8dfef); font: 13px "Liberation Sans", sans-serif; }
.dev-head span { margin-left: 9px; color: #111838; font-size: 13.500px; line-height: 15px; margin-top: -1px; }
.pl { width: 15px; height: 15px; border-radius: 3px; background: #0d55d8; color: #fff; font: bold 13px/15px "Liberation Sans", sans-serif; text-align: center; }
.dev-list { list-style: none; margin: 0; padding: 0; flex: 1; font: 13.300px/18px "Liberation Sans", sans-serif; overflow: hidden; color: #111; }
.dev-list li { height: 16px; padding-left: 2px; white-space: nowrap; overflow: hidden; }
.dev-list li.sel { height: 17px; background: #0a74d0; color: #fff; line-height: 17px; width: 115px; }
.hscroll { height: 18px; flex: none; display: flex; align-items: center; padding: 0 6px; background: #f0f0f0; position: relative; }
.hscroll svg { width: 8px; height: 10px; }
.hscroll svg:last-child { margin-left: auto; }
.thumb { width: 61px; height: 16px; margin-left: 6px; background: #c8c8c8; }

.canvas { width: 1716px; margin-left: 4px; height: 840px; flex: none; border: 1px solid #6f6f6f; overflow: hidden; background: #dfdfcf; }
.sheet { display: block; }
.cursor { stroke: #0000c8; stroke-width: 1; fill: none; }
.wire path { stroke: #003c00; stroke-width: 6.600; fill: none; shape-rendering: crispEdges; }
.junction { fill: #003c00; }
.ref { font: 47px "Liberation Sans", sans-serif; fill: #000; }
.val { font: 31.500px "Liberation Sans", sans-serif; fill: #000; }
.lcd { fill: #c8c8aa; stroke: #7f0000; stroke-width: 6; }
.screen { fill: #97ad00; stroke: #000; stroke-width: 4; }
.seg rect { fill: #000; }
.pin { stroke: #7f0000; stroke-width: 6; fill: none; }
.plabel text, .pnum text { font: 30.500px "Liberation Sans", sans-serif; fill: #000; }
.pnum text { text-anchor: end; }
.lo rect { fill: #4040ff; }
.hi rect { fill: #ff4040; }
.stats text { font: bold 11px "DejaVu Sans Mono", monospace; stroke: #000; stroke-width: 2px; paint-order: stroke; }
.stats .s-u { font-size: 6px; fill: #fff; stroke-width: 1px; }
.s-o { fill: #ff7f00; }
.s-g { fill: #10803c; }
.s-b { fill: #0a78c8; }
.s-p { fill: #c07a7a; }
.s-w { fill: #fff; }

.dollar { font: bold 17px "Liberation Sans", sans-serif; fill: #7a7a00; text-anchor: middle; }
.binary { font: bold 8.500px "DejaVu Sans Mono", monospace; fill: #1030c0; }
.q { font: bold 20px "Liberation Sans", sans-serif; fill: #fff; text-anchor: middle; }
.atext { font: bold 12px "Liberation Sans", sans-serif; fill: #999; }
.lbl { font: 13px "Liberation Sans", sans-serif; fill: #1414d8; text-anchor: middle; }

.status { height: 23px; flex: none; display: flex; align-items: center; border-top: 3px solid #e2e9f1; background: linear-gradient(#e8f2fa, #dcecf7 55%, #b2d2e7); position: relative; font: 13px "Liberation Sans", sans-serif; padding-left: 4px; }
.status .grip { height: 18px; }
.anim { margin-left: 7px; width: 398px; color: #16503a; font-size: 12.900px; }
.vsep { width: 1px; height: 18px; background: #a8b8c4; margin-right: 7px; }
.coord-x { position: absolute; left: 1110px; color: #1a2a3a; font-size: 12.500px; }
.coord-y { position: absolute; left: 1839px; color: #0a1a30; font-size: 12.500px; }
.units { position: absolute; left: 1908px; color: #2a0a9a; font-size: 12.500px; }

.player { height: 37px; flex: none; display: flex; align-items: center; background: linear-gradient(#e8f2fa, #dcecf7 55%, #b2d2e7); position: relative; padding-left: 4px; padding-top: 2px; }
.player .grip { height: 30px; margin-right: 14px; }
.pbtn { width: 26px; height: 24px; flex: none; margin-right: 18px; }
.psep { width: 1px; height: 26px; background: #8aa0b0; margin-left: -5px; margin-right: 11px; }
.pinfo { width: 24px; height: 24px; }
.msgs { position: absolute; left: 1035px; top: 12px; font: 13px "Liberation Sans", sans-serif; color: #1a2a3a; }

.media { height: 50px; flex: none; background: #f0f0f0; position: relative; }
.seek { display: flex; align-items: center; height: 14px; position: relative; z-index: 2; }
.time { width: 71px; padding-left: 9px; font: 13px/14px "DejaVu Sans", sans-serif; letter-spacing: .2px; flex: none; white-space: nowrap; color: #111; }
.time.end { width: auto; padding-left: 16px; color: #000; text-shadow: 0 0 1px #fff, 0 0 1px #fff, 0 0 1px #fff, 0 0 2px #fff; }
.track { width: 1781px; height: 9px; flex: none; border-radius: 4px; background: linear-gradient(#bcbcbc, #dedede); overflow: hidden; }
.fill { width: 1536px; height: 9px; background: #2a7ccb; }
.controls { display: flex; align-items: center; padding-left: 4px; height: 36px; margin-top: 1px; position: relative; }
.mb { width: 24px; height: 24px; border: 1px solid #acacac; background: #e4e4e4; display: flex; align-items: center; justify-content: center; flex: none; margin-right: 2px; }
.mb svg { width: 16px; height: 16px; }
.mb.play { width: 30px; height: 30px; margin-right: 14px; }
.mb.play svg { height: 18px; }
.mb.gap { margin-left: 12px; }
.volume { position: absolute; left: 1818px; top: 0; width: 98px; height: 36px; }
.speaker { position: absolute; left: 0; top: 20px; width: 16px; height: 14px; }
.volpct { position: absolute; left: 19px; top: 10px; font: 12.500px "Liberation Sans", sans-serif; color: #8a8a8a; }
.voltri { position: absolute; left: 22px; top: 11px; }
.overlay { position: absolute; left: 1880px; top: -19px; width: 24px; height: 53px; background: rgba(40, 46, 50, .95); display: flex; flex-direction: column; justify-content: space-between; z-index: 1; }
.overlay svg { display: block; }
```
